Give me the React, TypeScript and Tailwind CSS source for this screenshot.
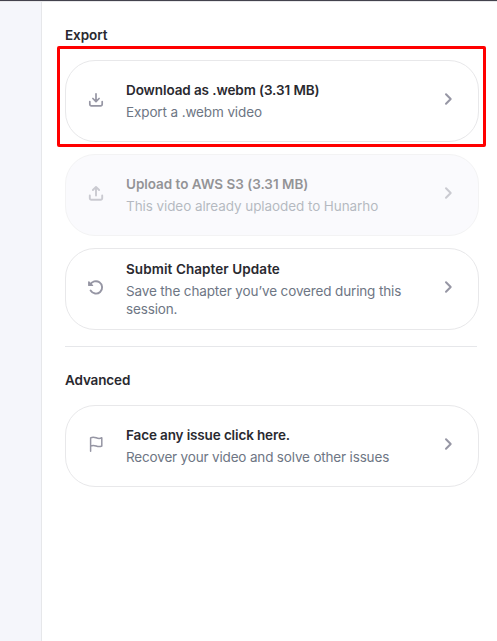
import type { ReactNode } from "react";

function Icon({ children, width = 1.7 }: { children: ReactNode; width?: number }) {
  return (
    <svg
      className="size-5 shrink-0 text-[#9696a4]"
      viewBox="0 0 20 20"
      fill="none"
      stroke="currentColor"
      strokeWidth={width}
      strokeLinecap="round"
      strokeLinejoin="round"
    >
      {children}
    </svg>
  );
}

const tray = "M3.8 10.5v2.8a1.5 1.5 0 0 0 1.5 1.500h9.400a1.500 1.500 0 0 0 1.500-1.500v-2.800";

const DownloadIcon = () => (
  <Icon>
    <path d={tray} />
    <path d="M10 2.8v7.600M6.9 7.500l3.1 3.1 3.1-3.1" />
  </Icon>
);

const UploadIcon = () => (
  <Icon width={1.9}>
    <path d={tray} />
    <path d="M10 10.500V2M6.900 5 10 1.900 13.100 5" />
  </Icon>
);

const ReloadIcon = () => (
  <Icon width={1.9}>
    <path d="M4.200 6a6.200 6.200 0 1 1 .4 5.600" />
    <path d="M2.700 2.800v3.700h3.900z" fill="currentColor" strokeWidth="1.200" />
  </Icon>
);

const FlagIcon = () => (
  <Icon width={1.5}>
    <path d="M4.600 15.200V1.800c2-1.100 3.700-.8 5.600 0s3.700.9 5.600 0v8.200c-1.900.9-3.700.7-5.600 0s-3.600-.9-5.600 0" />
  </Icon>
);

type CardProps = {
  icon: ReactNode;
  title: string;
  titleClass: string;
  text: string;
  textClass: string;
  disabled?: boolean;
};

function Card({ icon, title, titleClass, text, textClass, disabled }: CardProps) {
  return (
    <button
      className={`flex h-[82px] w-[414px] shrink-0 items-center rounded-[30px] border border-[#e8e8ea] pl-5 pr-[19px] text-left ${
        disabled ? "bg-[#f6f7fc] opacity-50" : "bg-white"
      }`}
    >
      {icon}
      <span className="ml-5 flex w-[290px] flex-col gap-1 text-[13.5px] leading-[18px]">
        <span className={`font-semibold whitespace-nowrap text-[#29292f] ${titleClass}`}>{title}</span>
        <span className={`text-[#6e7684] ${textClass}`}>{text}</span>
      </span>
      <span className="ml-auto flex">
        <Icon width={2}>
          <path d="m7 3.300 4.700 4.700L7 12.700" />
        </Icon>
      </span>
    </button>
  );
}

export default function App() {
  return (
    <div className="flex h-[641px] w-[497px] flex-col overflow-hidden border-t border-[#43424d] bg-white font-['Inter','Liberation_Sans',sans-serif]">
      <div className="flex flex-1 border-t border-[#e8e8ea]">
        <aside className="w-[42px] shrink-0 border-r border-[#e6e7ea] bg-[#f5f6fb]" />
        <main className="flex flex-col pt-6 pl-[23px]">
          <h2 className="text-[13.5px] leading-[18px] font-semibold tracking-[-0.07px] text-[#29292f]">Export</h2>
          <div className="relative mt-4 flex flex-col gap-3">
            <Card
              icon={<DownloadIcon />}
              title="Download as .webm (3.31 MB)"
              titleClass="tracking-[-0.1px]"
              text="Export a .webm video"
              textClass="tracking-[-0.12px]"
            />
            <Card
              icon={<UploadIcon />}
              title="Upload to AWS S3 (3.31 MB)"
              titleClass="tracking-[-0.03px]"
              text="This video already uplaoded to Hunarho"
              textClass="tracking-[-0.08px]"
              disabled
            />
            <Card
              icon={<ReloadIcon />}
              title="Submit Chapter Update"
              titleClass="tracking-[0.08px]"
              text="Save the chapter you’ve covered during this session."
              textClass="tracking-[-0.14px]"
            />
            <div className="pointer-events-none absolute -top-3.5 -left-2 h-[101px] w-[429px] rounded-[2px] border-3 border-[#ff0000]" />
          </div>
          <hr className="mt-4 w-[412px] border-[#e6e7ea]" />
          <h2 className="mt-6 text-[13.5px] leading-[18px] font-semibold tracking-[-0.13px] text-[#29292f]">Advanced</h2>
          <div className="mt-4">
            <Card
              icon={<FlagIcon />}
              title="Face any issue click here."
              titleClass="tracking-[-0.13px]"
              text="Recover your video and solve other issues"
              textClass="tracking-[-0.17px]"
            />
          </div>
        </main>
      </div>
    </div>
  );
}
